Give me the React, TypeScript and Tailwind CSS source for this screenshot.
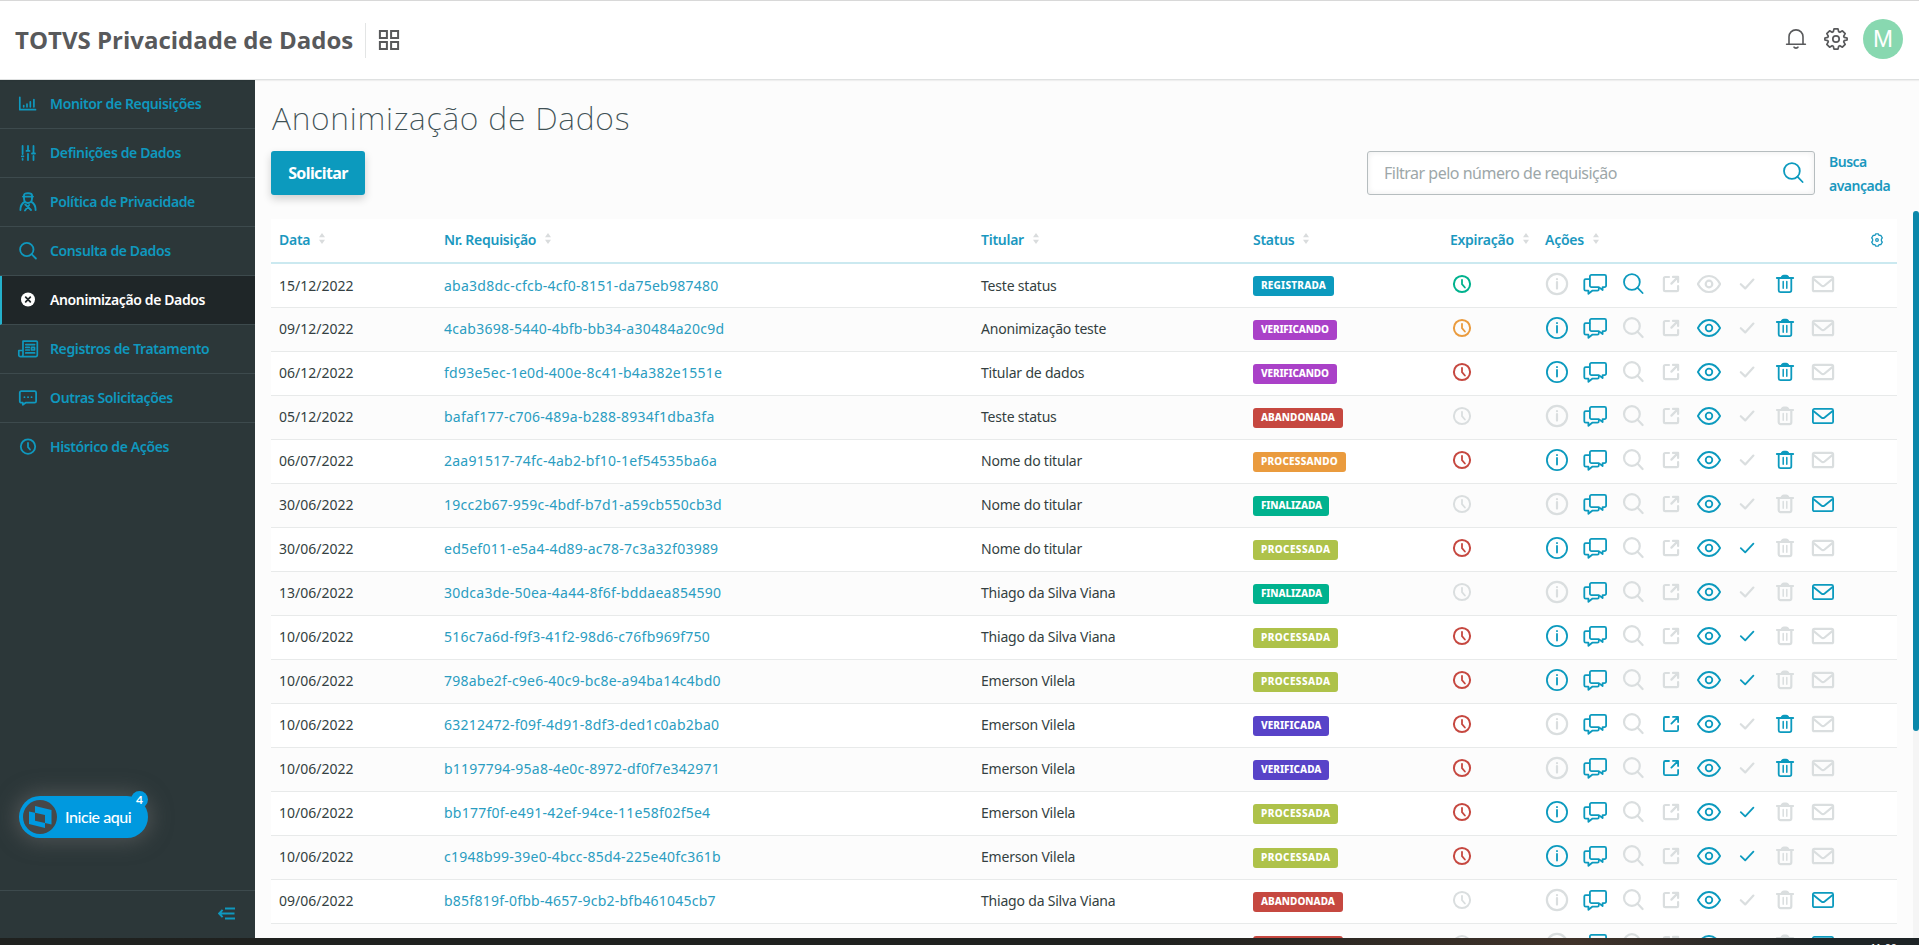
import type { ReactNode } from 'react';
import clsx from 'clsx';

type IconProps = { className?: string; sw?: number };

const Svg = ({ children, className, sw = 1.8 }: { children: ReactNode; className?: string; sw?: number }) => (
  <svg
    width="24"
    height="24"
    viewBox="0 0 24 24"
    fill="none"
    stroke="currentColor"
    strokeWidth={sw}
    strokeLinecap="round"
    strokeLinejoin="round"
    className={clsx('shrink-0', className)}
  >
    {children}
  </svg>
);

// --- TABLE ICONS ---
const InfoIcon = ({ className, sw }: IconProps) => (
  <Svg className={className} sw={sw}>
    <circle cx="12" cy="12" r="10.1" />
    <path d="M12 10v6.6M12 7v.2" />
  </Svg>
);

const ChatsIcon = ({ className, sw }: IconProps) => (
  <Svg className={className} sw={sw}>
    <path d="M8.4 2.9h13.2a1.5 1.5 0 0 1 1.5 1.5v9.2a1.5 1.5 0 0 1-1.5 1.5h-2V18l-3.8-2.9H8.4a1.5 1.5 0 0 1-1.5-1.5V4.4a1.5 1.5 0 0 1 1.5-1.5z" />
    <path d="M6.5 7.2H2.7a1.4 1.4 0 0 0-1.4 1.4v8.6a1.5 1.5 0 0 0 1.5 1.5h2.6v3.1l3.8-3.1h5.2a1.4 1.4 0 0 0 1.4-1.4v-.8" />
  </Svg>
);

const SearchIcon = ({ className, sw }: IconProps) => (
  <Svg className={className} sw={sw}>
    <circle cx="10.9" cy="10" r="7.9" />
    <path d="M16.4 15.6l5.2 5.4" />
  </Svg>
);

const ExportIcon = ({ className, sw }: IconProps) => (
  <Svg className={className} sw={sw}>
    <path d="M10 5H6.3A1.4 1.4 0 0 0 4.9 6.4v11.3a1.4 1.4 0 0 0 1.4 1.4h11.4a1.4 1.4 0 0 0 1.4-1.4V14" />
    <path d="M14 4.9h5.1V10M18.6 5.4l-6.2 6.2" />
  </Svg>
);

const EyeIcon = ({ className, sw }: IconProps) => (
  <Svg className={className} sw={sw}>
    <path d="M.9 12C3.6 6.9 7.6 4 12 4s8.4 2.9 11.1 8C20.4 17.1 16.4 20 12 20S3.6 17.1.9 12z" />
    <circle cx="12" cy="12" r="3.3" />
  </Svg>
);

const CheckIcon = ({ className, sw }: IconProps) => (
  <Svg className={className} sw={sw}>
    <path d="M5.8 12.2l4.4 4.2 8.2-8.8" />
  </Svg>
);

const TrashIcon = ({ className, sw }: IconProps) => (
  <Svg className={className} sw={sw}>
    <path d="M3.9 5.9h16.2" strokeWidth="2" />
    <path d="M8.8 5c.6-1.2 1.2-1.4 2-1.4h2.4c.8 0 1.4.2 2 1.4z" fill="currentColor" />
    <path d="M5.7 6.5v11.8a1.8 1.8 0 0 0 1.8 1.8h9a1.8 1.8 0 0 0 1.8-1.8V6.5" />
    <path d="M10.2 9.5v6.8M13.8 9.5v6.8" strokeWidth="1.5" />
  </Svg>
);

const MailIcon = ({ className, sw }: IconProps) => (
  <Svg className={className} sw={sw}>
    <rect x="1.9" y="4.9" width="20.2" height="14.3" rx="1.5" />
    <path d="M2.7 7.2l7.7 6.3a2.6 2.6 0 0 0 3.2 0l7.7-6.3" />
  </Svg>
);

const ClockIcon = ({ className }: IconProps) => (
  <Svg className={className} sw={2}>
    <circle cx="12" cy="12" r="8.1" />
    <path d="M12 7.8v4.4l2.9 3.3" strokeWidth="1.8" />
  </Svg>
);

const GearIcon = ({ className }: IconProps) => (
  <Svg className={className} sw={1.7}>
    <circle cx="12" cy="12" r="3.2" />
    <path d="M10 1.9h4l.7 2.9 1.2.5 2.5-1.5 2.8 2.8-1.5 2.5.5 1.2 2.9.7v2l-2.9.7-.5 1.2 1.5 2.5-2.8 2.8-2.5-1.5-1.2.5-.7 2.9h-4l-.7-2.9-1.2-.5-2.5 1.5-2.8-2.8 1.5-2.5-.5-1.2-2.9-.7v-2l2.9-.7.5-1.2-1.5-2.5 2.8-2.8 2.5 1.5 1.2-.5z" />
  </Svg>
);

const ColumnsIcon = () => (
  <svg
    width="14"
    height="14"
    viewBox="0 0 14 14"
    fill="none"
    stroke="currentColor"
    strokeWidth="1.3"
    strokeLinejoin="round"
    className="ml-auto mr-[5px] mt-px"
  >
    <circle cx="7" cy="7" r="1.3" />
    <path d="M5.600.9h2.800l.7 1.500 1.700-.1 1.500 2.500-.9 1.300v1.800l.9 1.300-1.500 2.500-1.700-.1-.7 1.500H5.600l-.7-1.500-1.700.1-1.500-2.500.9-1.300V6.100l-.9-1.300 1.500-2.500 1.700.1z" />
  </svg>
);

const SortIcon = () => (
  <svg width="6" height="11" viewBox="0 0 6 11" fill="#d9dcdd" className="ml-[9px] -mt-0.5">
    <path d="M3 0l3 4.2H0zM3 11l3-4.2H0z" />
  </svg>
);

// --- SIDEBAR ---
const menu = [
  {
    label: 'Monitor de Requisições',
    icon: (
      <Svg sw={1.7}>
        <path d="M3.8 5.3v12.4h15.7M7.7 13.6v1.2M11 12v2.8M14.3 9.8v5M17.9 7.5v7.3" />
      </Svg>
    ),
  },
  {
    label: 'Definições de Dados',
    icon: (
      <Svg>
        <path d="M6.600 5v8M6.600 17.800v1M12 5v4.500M12 13v6M17.500 5v6.500M17.500 15v4M5.800 15.300h1.600M10.500 9.900h3M16 12.500h3" />
      </Svg>
    ),
  },
  {
    label: 'Política de Privacidade',
    icon: (
      <Svg sw={1.9}>
        <path d="M8 5.200c0-1.300 1-2 4-2s4 .7 4 2v3.300c0 2.600-1.800 4.500-4 4.500s-4-1.900-4-4.500zM7 6.600h10" />
        <path d="M8.600 11.800c-3 1.700-4.200 4.200-4.200 8.200M15.400 11.800c3 1.700 4.200 4.200 4.200 8.200M9.300 14.500L15 20M9 20.500l4.200-5.500" />
      </Svg>
    ),
  },
  {
    label: 'Consulta de Dados',
    icon: (
      <Svg>
        <circle cx="10.8" cy="10.5" r="6.7" />
        <path d="M15.6 15.2l4.3 4.3" />
      </Svg>
    ),
  },
  {
    label: 'Anonimização de Dados',
    active: true,
    icon: (
      <Svg>
        <circle cx="12" cy="11.5" r="7" fill="white" stroke="none" />
        <path d="M9.7 9.2l4.6 4.6M14.3 9.2l-4.6 4.6" stroke="#1f2628" />
      </Svg>
    ),
  },
  {
    label: 'Registros de Tratamento',
    icon: (
      <Svg sw={1.7}>
        <path d="M7 4.100h13.300a1 1 0 0 1 1 1v13a1.500 1.500 0 0 1-1.500 1.500H4.500a1.700 1.700 0 0 1-1.700-1.700v-4.400H7zM7 4.100v13.700a1.700 1.700 0 0 1-1.700 1.800" />
        <path d="M9.800 7.600h8.800M9.800 10.400h3.500M9.800 13h3.500M9.800 15.900h8.800M15.500 10.400h3v2.600h-3z" />
      </Svg>
    ),
  },
  {
    label: 'Outras Solicitações',
    icon: (
      <Svg>
        <path d="M5.300 5.200h13.300a1.500 1.500 0 0 1 1.500 1.500v8.500a1.500 1.500 0 0 1-1.500 1.500h-9l-2.800 2v-2H5.300a1.500 1.500 0 0 1-1.500-1.500V6.700a1.500 1.500 0 0 1 1.500-1.500z" />
        <path d="M8.400 11.200h.1M12 11.200h.1M15.500 11.200h.1" />
      </Svg>
    ),
  },
  {
    label: 'Histórico de Ações',
    icon: (
      <Svg>
        <circle cx="12" cy="11.6" r="7.2" />
        <path d="M12 8v4.200l2 2.300" />
      </Svg>
    ),
  },
];

// --- TABLE DATA ---
const statusStyle: Record<string, string> = {
  REGISTRADA: 'bg-[#0c9abe] w-[81px] tracking-[0.2px]',
  VERIFICANDO: 'bg-[#aa41c8] w-[84px] tracking-[-0.17px]',
  ABANDONADA: 'bg-[#c64840] w-[90px] tracking-[0px]',
  PROCESSANDO: 'bg-[#ea9b3e] w-[93px] tracking-[0.2px]',
  FINALIZADA: 'bg-[#00b28e] w-[76px] tracking-[-0.1px]',
  PROCESSADA: 'bg-[#aec24a] w-[85px] tracking-[0.4px]',
  VERIFICADA: 'bg-[#5843c8] w-[76px] tracking-[0px]',
};

const clockColor: Record<string, string> = {
  green: 'text-[#00b28e]',
  orange: 'text-[#ea9b3e]',
  red: 'text-[#c64840]',
  off: 'text-[#dadedf]',
};

const actions = [
  { key: 'i', Icon: InfoIcon },
  { key: 'c', Icon: ChatsIcon },
  { key: 's', Icon: SearchIcon },
  { key: 'x', Icon: ExportIcon },
  { key: 'e', Icon: EyeIcon },
  { key: 'k', Icon: CheckIcon },
  { key: 't', Icon: TrashIcon },
  { key: 'm', Icon: MailIcon },
];

// date, request number, holder, status, expiration, enabled actions
const rows = [
  ['15/12/2022', 'aba3d8dc-cfcb-4cf0-8151-da75eb987480', 'Teste status', 'REGISTRADA', 'green', 'cst'],
  ['09/12/2022', '4cab3698-5440-4bfb-bb34-a30484a20c9d', 'Anonimização teste', 'VERIFICANDO', 'orange', 'icet'],
  ['06/12/2022', 'fd93e5ec-1e0d-400e-8c41-b4a382e1551e', 'Titular de dados', 'VERIFICANDO', 'red', 'icet'],
  ['05/12/2022', 'bafaf177-c706-489a-b288-8934f1dba3fa', 'Teste status', 'ABANDONADA', 'off', 'cem'],
  ['06/07/2022', '2aa91517-74fc-4ab2-bf10-1ef54535ba6a', 'Nome do titular', 'PROCESSANDO', 'red', 'icet'],
  ['30/06/2022', '19cc2b67-959c-4bdf-b7d1-a59cb550cb3d', 'Nome do titular', 'FINALIZADA', 'off', 'cem'],
  ['30/06/2022', 'ed5ef011-e5a4-4d89-ac78-7c3a32f03989', 'Nome do titular', 'PROCESSADA', 'red', 'icek'],
  ['13/06/2022', '30dca3de-50ea-4a44-8f6f-bddaea854590', 'Thiago da Silva Viana', 'FINALIZADA', 'off', 'cem'],
  ['10/06/2022', '516c7a6d-f9f3-41f2-98d6-c76fb969f750', 'Thiago da Silva Viana', 'PROCESSADA', 'red', 'icek'],
  ['10/06/2022', '798abe2f-c9e6-40c9-bc8e-a94ba14c4bd0', 'Emerson Vilela', 'PROCESSADA', 'red', 'icek'],
  ['10/06/2022', '63212472-f09f-4d91-8df3-ded1c0ab2ba0', 'Emerson Vilela', 'VERIFICADA', 'red', 'cxet'],
  ['10/06/2022', 'b1197794-95a8-4e0c-8972-df0f7e342971', 'Emerson Vilela', 'VERIFICADA', 'red', 'cxet'],
  ['10/06/2022', 'bb177f0f-e491-42ef-94ce-11e58f02f5e4', 'Emerson Vilela', 'PROCESSADA', 'red', 'icek'],
  ['10/06/2022', 'c1948b99-39e0-4bcc-85d4-225e40fc361b', 'Emerson Vilela', 'PROCESSADA', 'red', 'icek'],
  ['09/06/2022', 'b85f819f-0fbb-4657-9cb2-bfb461045cb7', 'Thiago da Silva Viana', 'ABANDONADA', 'off', 'cem'],
  ['', '', '', 'ABANDONADA', 'off', 'cem'],
];

const columns = ['Data', 'Nr. Requisição', 'Titular', 'Status', 'Expiração', 'Ações'];

const gridCols = 'grid grid-cols-[165px_537px_272px_197px_95px_360px]';

function Header() {
  return (
    <header className="relative z-10 flex h-20 shrink-0 items-center border-t border-b border-t-[#d8d8d8] border-b-[#dfe1e1] bg-white pl-[15px] pr-4 shadow-[0_1px_1px_rgba(0,0,0,0.05)]">
      <h1 className="font-['Open_Sans',sans-serif] text-2xl font-bold text-[#58595b]">TOTVS Privacidade de Dados</h1>
      <div className="ml-3 h-[35px] w-px bg-[#e3e5e5]" />
      <svg width="22" height="22" viewBox="0 0 22 22" fill="none" stroke="#58595b" strokeWidth="2" className="ml-3">
        <path d="M1.900 1.900h7v7h-7zM13.100 1.900h7v7h-7zM1.900 13.100h7v7h-7zM13.100 13.100h7v7h-7z" />
      </svg>
      <div className="ml-auto flex items-center pb-[2px] text-[#58595b]">
        <svg width="22" height="22" viewBox="0 0 22 22" fill="none" stroke="currentColor" strokeWidth="1.6" strokeLinecap="round">
          <path d="M1.600 16.300h18.800M4 16V8.800C4 4.800 7 1.900 11 1.900s7 2.900 7 6.900V16M9 19.200c.6 1.200 3.400 1.200 4 0" />
        </svg>
        <GearIcon className="ml-[17px]" />
        <div className="ml-[15px] flex size-10 items-center justify-center rounded-full bg-[#88d8b0] font-['Liberation_Sans',sans-serif] text-2xl leading-none text-white">
          M
        </div>
      </div>
    </header>
  );
}

function Sidebar() {
  return (
    <aside className="relative flex w-[255px] shrink-0 flex-col bg-[#2c3739] text-[#0f98be]">
      <nav>
        {menu.map((item, i) => (
          <a
            key={item.label}
            className={clsx(
              'flex h-[49px] items-center border-b text-sm font-semibold tracking-[-0.38px]',
              i < menu.length - 1 ? 'border-b-[#3d4a4d]' : 'border-b-transparent',
              item.active ? 'border-l-2 border-l-[#24b0cb] bg-[#1f2628] pl-[14px] text-white' : 'pl-4'
            )}
          >
            {item.icon}
            <span className="pb-px pl-[10px]">{item.label}</span>
          </a>
        ))}
      </nav>
      <div className="mt-auto flex h-12 items-center justify-end border-t border-[#3d4a4d] pb-[3px] pr-5">
        <svg width="17" height="13" viewBox="0 0 17 13" fill="none" stroke="currentColor" strokeWidth="2">
          <path d="M7 1.500h10M1 6.500h15.500M7 11.500h10M4.600 2.900L1.200 6.500l3.400 3.600" />
        </svg>
      </div>

      {/* Floating helper button */}
      <div className="absolute left-[19px] top-[716px] flex h-[42px] w-[129px] items-center rounded-full bg-[#0099df] pl-1 font-['Lato',sans-serif] text-base text-white shadow-[0_0_20px_4px_rgba(110,110,110,0.5)]">
        <svg width="34" height="34" viewBox="0 0 34 34">
          <circle cx="17" cy="17" r="17" fill="#474747" />
          <path
            fill="#0099df"
            fillRule="evenodd"
            d="M12 6l16.500 4v14.500l-6.500-1.500v5L6 24V11.500l6 1.300zM12 12.800v8L22 23v-8z"
          />
        </svg>
        <span className="ml-2 font-medium tracking-[-0.45px]">Inicie aqui</span>
        <span className="absolute -top-[5px] right-0 flex size-[17px] items-center justify-center rounded-full bg-[#0099df] text-xs font-bold">4</span>
      </div>
    </aside>
  );
}

function DataTable() {
  return (
    <div className="mt-6 w-[1626px]">
      <div className={clsx(gridCols, 'h-[45px] border-b-2 border-[#cbe9f0] bg-white text-[#1a98bf]')}>
        {columns.map((col) => (
          <div key={col} className="flex items-center px-2 pb-0.5 text-sm font-semibold tracking-[-0.27px]">
            {col}
            <SortIcon />
            {col === 'Ações' && <ColumnsIcon />}
          </div>
        ))}
      </div>
      {rows.map(([date, id, holder, status, clock, enabled], i) => {
        // the first row sits one pixel lower, under the thicker header line
        const cell = clsx('px-2 leading-5', i === 0 ? 'pt-3' : 'pt-[11px]');

        return (
          <div
            key={i}
            className={clsx(gridCols, 'h-11 border-b border-[#e8eaea] text-sm text-[#343f41]', i % 2 ? 'bg-[#fcfcfc]' : 'bg-white')}
          >
            <div className={cell}>{date}</div>
            <div className={clsx(cell, 'tracking-[0.24px] text-[#2a9dc1]')}>{id}</div>
            <div className={clsx(cell, 'tracking-[-0.2px]')}>{holder}</div>
            <div className="px-2 pt-3">
              <span
                className={clsx(
                  'block h-5 rounded-[3px] pl-2 text-[10px] leading-[19px] font-extrabold text-white',
                  statusStyle[status]
                )}
              >
                {status}
              </span>
            </div>
            <div className="pl-2 pt-2">
              <ClockIcon className={clockColor[clock]} />
            </div>
            <div className="flex gap-3.5 pl-2 pt-2">
              {actions.map(({ key, Icon }) => {
                const on = enabled.includes(key);
                return <Icon key={key} sw={on ? 1.8 : 2.2} className={on ? 'text-[#0c9abe]' : 'text-[#dadedf]'} />;
              })}
            </div>
          </div>
        );
      })}
    </div>
  );
}

export default function App() {
  return (
    <div className="flex h-[945px] w-[1919px] flex-col overflow-hidden bg-[#fcfcfc] font-['Noto_Sans',sans-serif]">
      <Header />
      <div className="flex h-[858px]">
        <Sidebar />
        <main className="h-full grow overflow-hidden pl-4 pt-[17px]">
          <h2 className="h-[54px] pl-px pt-px text-[32px] leading-[40px] font-extralight tracking-[0.75px] text-[#3f5155]">
            Anonimização de Dados
          </h2>
          <div className="flex h-11 items-center">
            <button className="h-11 w-[94px] rounded-[3px] bg-[#0c9abe] text-base font-bold tracking-[-0.6px] text-white shadow-[0_4px_8px_rgba(0,0,0,0.18)]">
              Solicitar
            </button>
            <div className="ml-auto flex h-11 w-[448px] items-center rounded-[3px] border border-[#b6bdbf] bg-white pl-4 pr-[9px] shadow-[inset_0_0_6px_rgba(0,0,0,0.08)]">
              <span className="pb-px text-base tracking-[-0.5px] text-[#9da7a9]">Filtrar pelo número de requisição</span>
              <SearchIcon className="ml-auto text-[#0c9abe]" />
            </div>
            <a className="ml-3.5 w-[84px] pt-0.5 text-sm leading-6 font-semibold tracking-[-0.5px] text-[#1a98bf]">
              Busca
              <br />
              avançada
            </a>
          </div>
          <DataTable />
        </main>
        <div className="mt-[131px] w-1.5 bg-[#f5f5f5]">
          <div className="h-[520px] rounded-full bg-[#0b88aa]" />
        </div>
      </div>
      <footer className="h-[7px] overflow-hidden bg-linear-to-r from-[#1f211f] from-60% via-[#40332a] via-82% to-[#1e2426] to-95% pr-[22px] text-right font-['Liberation_Sans',sans-serif] text-[11px] leading-4 text-white">
        <span className="block pt-[2px]">11:00</span>
      </footer>
    </div>
  );
}
